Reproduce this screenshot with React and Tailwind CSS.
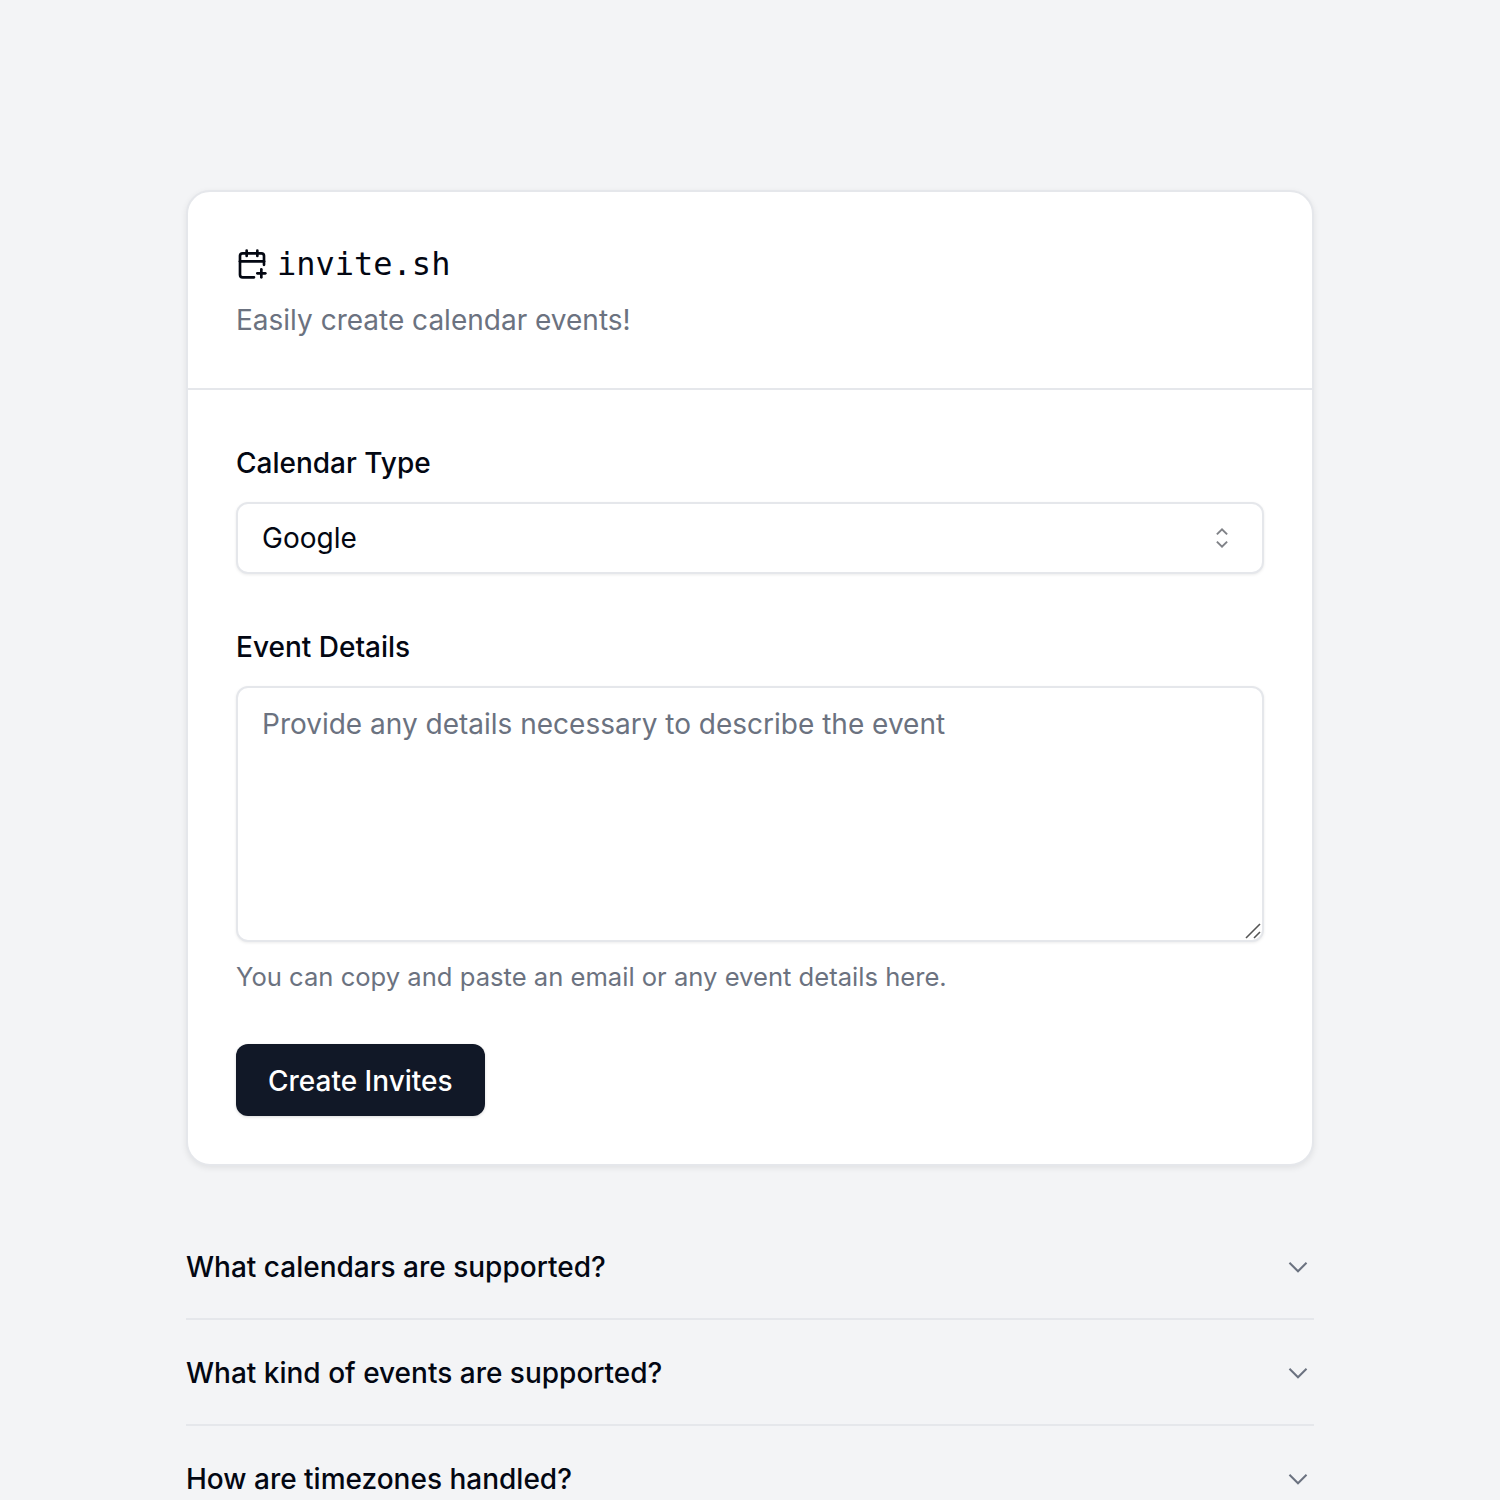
import { CalendarPlus } from "lucide-react";

const faqs = [
  "What calendars are supported?",
  "What kind of events are supported?",
  "How are timezones handled?",
];

function CaretSort() {
  return (
    <svg width="32" height="32" viewBox="0 0 15 15" fill="none" stroke="#030712" strokeWidth="0.9" className="opacity-50">
      <path d="M5.1 5.8 7.5 3.4 9.9 5.8" />
      <path d="M5.1 9.2 7.5 11.6 9.9 9.2" />
    </svg>
  );
}

function Chevron() {
  return (
    <svg width="32" height="32" viewBox="0 0 15 15" fill="none" stroke="#6b7280" strokeWidth="0.95" className="shrink-0">
      <path d="M3.5 6 7.5 10 11.5 6" />
    </svg>
  );
}

export default function App() {
  return (
    <div className="h-[1500px] overflow-hidden bg-[#f3f4f6] pt-[190px] font-['Inter',sans-serif] text-[#030712] antialiased">
      <div className="mx-auto w-[1128px]">
        <div className="rounded-[24px] border-2 border-[#e5e7eb] bg-white shadow-[0_2px_6px_rgba(0,0,0,0.08)]">
          <div className="flex flex-col gap-3 border-b-2 border-[#e5e7eb] p-12">
            <div className="flex h-12 items-center gap-[9px]">
              <CalendarPlus size={32} strokeWidth={2} className="shrink-0" />
              <h1 className="font-['DejaVu_Sans_Mono',monospace] text-[32px] leading-[48px]">invite.sh</h1>
            </div>
            <p className="text-[28px] leading-10 text-[#6b7280]">Easily create calendar events!</p>
          </div>

          <div className="flex flex-col gap-12 p-12">
            <div>
              <label className="block pt-[2px] text-[28px] leading-[46px] font-medium">Calendar Type</label>
              <button className="mt-4 flex h-[72px] w-full items-center justify-between rounded-[12px] border-2 border-[#e5e7eb] bg-white px-6 text-[28px] shadow-[0_1px_3px_rgba(0,0,0,0.08)]">
                <span>Google</span>
                <CaretSort />
              </button>
            </div>

            <div>
              <label className="block pt-[2px] text-[28px] leading-[46px] font-medium">Event Details</label>
              <div className="relative mt-4">
                <textarea
                  placeholder="Provide any details necessary to describe the event"
                  className="block h-[256px] w-full resize-none rounded-[12px] border-2 border-[#e5e7eb] bg-white px-6 py-4 text-[28px] leading-10 shadow-[0_1px_3px_rgba(0,0,0,0.08)] outline-none placeholder:text-[#6b7280]"
                />
                <svg width="16" height="16" viewBox="0 0 16 16" fill="none" stroke="#555" strokeWidth="1.6" className="absolute right-[3px] bottom-[3px]">
                  <path d="M1 15 15 1" />
                  <path d="M9 15 15 9" />
                </svg>
              </div>
              <p className="mt-4 pt-[1px] pb-[1px] text-[25.6px] leading-9 text-[#6b7280]">You can copy and paste an email or any event details here.</p>
            </div>

            <button className="h-[72px] w-fit rounded-[12px] bg-[#111827] px-8 pt-[2px] text-[28px] font-medium text-white shadow-[0_1px_3px_rgba(0,0,0,0.15)]">
              Create Invites
            </button>
          </div>
        </div>

        <div className="mt-12">
          {faqs.map((q) => (
            <div key={q} className="flex h-[106px] items-center justify-between border-b-2 border-[#e5e7eb]">
              <span className="pt-[2px] text-[28px] font-medium">{q}</span>
              <Chevron />
            </div>
          ))}
        </div>
      </div>
    </div>
  );
}
